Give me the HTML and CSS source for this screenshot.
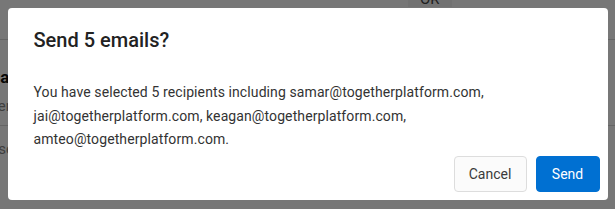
FILE: index.html
```html
<!DOCTYPE html>
<html lang="en">
<head>
<meta charset="utf-8">
<title>Send 5 emails?</title>
<link rel="stylesheet" href="styles.css">
</head>
<body>
<div class="page">
  <div class="or-row"><span class="or">OR</span></div>
  <div class="section">
    <div class="label">Email</div>
    <div class="hint">Enter</div>
  </div>
  <div class="section section-last">
    <div class="hint">Presets</div>
  </div>
</div>
<div class="overlay">
  <div class="modal" role="dialog">
    <h1 class="modal-title">Send 5 emails?</h1>
    <p class="modal-body">You have selected 5 recipients including samar@togetherplatform.com, jai@togetherplatform.com, keagan@togetherplatform.com, amteo@togetherplatform.com.</p>
    <div class="modal-actions">
      <button class="btn btn-secondary">Cancel</button>
      <button class="btn btn-primary">Send</button>
    </div>
  </div>
</div>
</body>
</html>
```
FILE: styles.css
```css
html, body {
  margin: 0;
  padding: 0;
  height: 100%;
}
body {
  background: #ffffff;
  font-family: Roboto, "Liberation Sans", Arial, sans-serif;
  overflow: hidden;
}
.page {
  margin-left: -24px;
  margin-top: -8px;
}
.or-row {
  height: 48px;
  border-bottom: 1px solid #d8d8d8;
  display: flex;
  justify-content: flex-start;
  padding-left: 432px;
  box-sizing: border-box;
}
.or {
  display: block;
  height: 15px;
  padding: 0 12px;
  background: #f4f4f4;
  color: #444;
  font-size: 15px;
  line-height: 15px;
}
.section {
  height: 86px;
  border-bottom: 1px solid #d8d8d8;
  padding-top: 27px;
  box-sizing: border-box;
}
.label {
  font-size: 17px;
  font-weight: 700;
  color: #111;
  line-height: 20px;
}
.hint {
  font-size: 15px;
  color: #888;
  margin-top: 10px;
}
.section-last {
  border-bottom: none;
  padding-top: 4px;
}
.overlay {
  position: fixed;
  inset: 0;
  background: rgba(0, 0, 0, 0.535);
  display: flex;
  justify-content: center;
  align-items: flex-start;
  padding-top: 8px;
}
.modal {
  width: 600px;
  height: 192px;
  box-sizing: border-box;
  background: #ffffff;
  border-radius: 4px;
  padding: 20px 8px 8px 26px;
  display: flex;
  flex-direction: column;
}
.modal-title {
  margin: 0;
  font-size: 20px;
  font-weight: 500;
  line-height: 24px;
  color: #222222;
}
.modal-body {
  margin: 29px 0 0 0;
  font-size: 14px;
  line-height: 23.5px;
  letter-spacing: 0.1px;
  color: #333333;
  padding-right: 80px;
}
.modal-actions {
  margin-top: auto;
  display: flex;
  justify-content: flex-end;
  gap: 9px;
}
.btn {
  height: 36px;
  box-sizing: border-box;
  border-radius: 4px;
  font-family: Roboto, "Liberation Sans", Arial, sans-serif;
  font-size: 14px;
  padding: 0;
  cursor: pointer;
}
.btn-secondary {
  width: 73px;
  background: #fbfbfb;
  border: 1px solid #dddddd;
  color: #3a3a3a;
}
.btn-primary {
  width: 64px;
  background: #0070d2;
  border: 1px solid #0070d2;
  color: #ffffff;
}
```
